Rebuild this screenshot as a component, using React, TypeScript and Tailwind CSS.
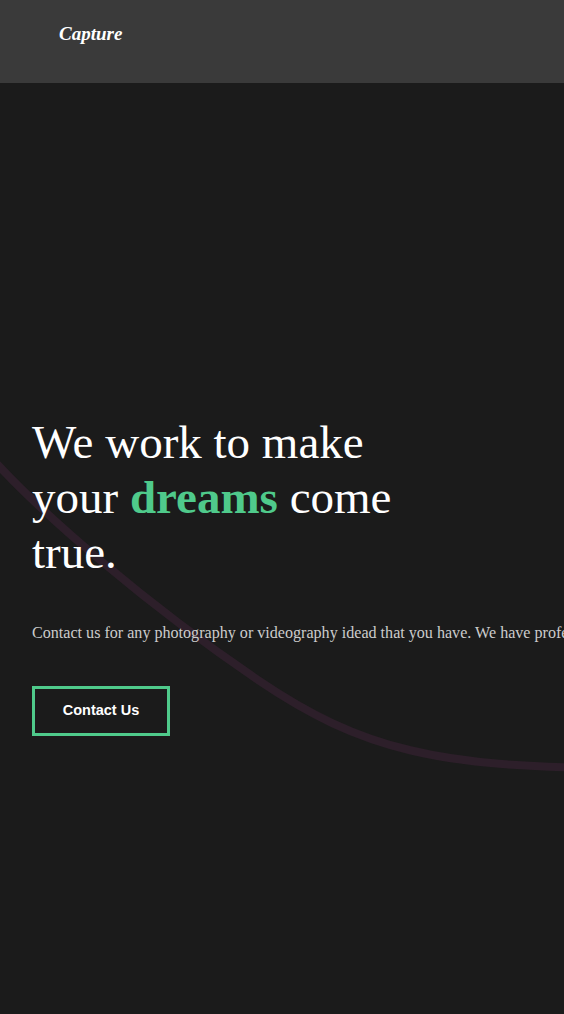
export default function App() {
  return (
    <div className="relative min-h-[1014px] w-full overflow-hidden bg-[#1b1b1b] font-['Liberation_Serif',serif]">
      <svg
        className="pointer-events-none absolute left-0 top-0"
        width="564"
        height="1014"
        viewBox="0 0 564 1014"
        fill="none"
      >
        <path
          d="M -20 445 C 40 515, 155 610, 258 680 S 440 768, 620 768"
          stroke="#2d1f2a"
          strokeWidth="8"
        />
      </svg>

      <nav className="relative h-[83px] bg-[#3a3a3a] px-[59px] pt-[22px]">
        <span className="block text-[19px] font-bold italic leading-6 text-white">
          Capture
        </span>
      </nav>

      <main className="relative px-8 pt-[332px]">
        <h1 className="max-w-[400px] text-[47px] leading-[55px] text-white">
          We work to make your{" "}
          <span className="font-bold text-[#4fca8b]">dreams</span> come true.
        </h1>
        <p className="mt-[41px] whitespace-nowrap text-[16.1px] leading-6 text-[#cccccc]">
          Contact us for any photography or videography idead that you have. We
          have professionals with amazing skills.
        </p>
        <button className="mt-[41px] flex h-[50px] w-[138px] items-center justify-center border-[3px] border-[#4fca8b] font-['Liberation_Sans',sans-serif] text-[14.5px] font-bold text-white">
          Contact Us
        </button>
      </main>
    </div>
  );
}
